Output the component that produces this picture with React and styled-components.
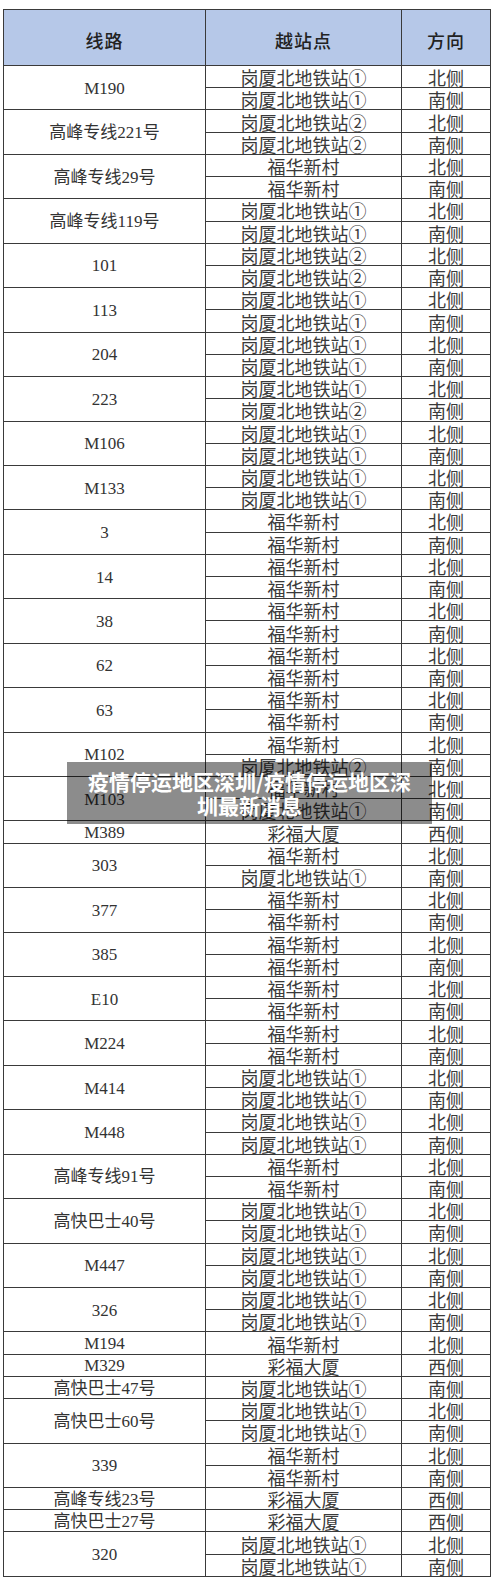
import React from "react";
import styled, { createGlobalStyle } from "styled-components";

const GlobalStyle = createGlobalStyle`
  html, body {
    margin: 0;
    padding: 0;
    background: #ffffff;
  }
`;

const Page = styled.div`
  position: relative;
  width: 500px;
  min-height: 1588px;
  padding: 9px 0 0 3px;
  box-sizing: border-box;
  font-family: "Liberation Serif", "Noto Sans CJK SC", serif;
  color: #333;
`;

const Table = styled.div`
  width: 488px;
  border: 1px solid #3a3a3a;
  border-bottom: none;
  box-sizing: border-box;
`;

const Header = styled.div`
  display: grid;
  grid-template-columns: 202px 196px 1fr;
  height: 56px;
  background: #b6c8e8;
  border-bottom: 1px solid #3a3a3a;
  box-sizing: border-box;
`;

const HeadCell = styled.div`
  display: flex;
  align-items: center;
  justify-content: center;
  padding-top: 4px;
  font-family: "Noto Sans CJK SC", sans-serif;
  font-size: 18px;
  font-weight: 500;
  letter-spacing: 1px;
  color: #222;
  border-right: ${(p) => (p.$last ? "none" : "1px solid #3a3a3a")};
`;

const Group = styled.div`
  display: grid;
  grid-template-columns: 202px 1fr;
`;

const Route = styled.div`
  display: flex;
  align-items: center;
  justify-content: center;
  min-height: 0;
  padding-top: 2px;
  font-size: 17px;
  line-height: 18px;
  color: #333;
  border-right: 1px solid #3a3a3a;
  border-bottom: 1px solid #3a3a3a;
  box-sizing: border-box;
  overflow: hidden;
`;

const Stops = styled.div`
  display: flex;
  flex-direction: column;
`;

const Line = styled.div`
  display: grid;
  grid-template-columns: 196px 1fr;
  height: 22.22px;
  border-bottom: 1px solid #3a3a3a;
  box-sizing: border-box;
`;

const Cell = styled.div`
  display: flex;
  align-items: center;
  justify-content: center;
  padding-top: 1px;
  font-family: "Noto Sans CJK SC", sans-serif;
  font-size: 18px;
  line-height: 20px;
  color: #3a3a3a;
  border-right: ${(p) => (p.$last ? "none" : "1px solid #3a3a3a")};
`;

const Caption = styled.div`
  position: absolute;
  top: 762px;
  left: 67px;
  width: 365px;
  height: 62px;
  padding: 7px 12px 0;
  box-sizing: border-box;
  background: rgba(0, 0, 0, 0.45);
  color: #ffffff;
  font-family: "Noto Sans CJK SC", sans-serif;
  font-size: 21px;
  font-weight: 700;
  line-height: 24px;
  text-align: center;
`;

const G1 = "岗厦北地铁站①";
const G2 = "岗厦北地铁站②";
const F = "福华新村";
const C = "彩福大厦";

const both = (a, b = a) => [
  [a, "北侧"],
  [b, "南侧"],
];

const routes = [
  ["M190", both(G1)],
  ["高峰专线221号", both(G2)],
  ["高峰专线29号", both(F)],
  ["高峰专线119号", both(G1)],
  ["101", both(G2)],
  ["113", both(G1)],
  ["204", both(G1)],
  ["223", both(G1, G2)],
  ["M106", both(G1)],
  ["M133", both(G1)],
  ["3", both(F)],
  ["14", both(F)],
  ["38", both(F)],
  ["62", both(F)],
  ["63", both(F)],
  ["M102", both(F, G2)],
  ["M103", both(F, G1)],
  ["M389", [[C, "西侧"]]],
  ["303", both(F, G1)],
  ["377", both(F)],
  ["385", both(F)],
  ["E10", both(F)],
  ["M224", both(F)],
  ["M414", both(G1)],
  ["M448", both(G1)],
  ["高峰专线91号", both(F)],
  ["高快巴士40号", both(G1)],
  ["M447", both(G1)],
  ["326", both(G1)],
  ["M194", [[F, "北侧"]]],
  ["M329", [[C, "西侧"]]],
  ["高快巴士47号", [[G1, "南侧"]]],
  ["高快巴士60号", both(G1)],
  ["339", both(F)],
  ["高峰专线23号", [[C, "西侧"]]],
  ["高快巴士27号", [[C, "西侧"]]],
  ["320", both(G1)],
];

const App = () => {
  return (
    <Page>
      <GlobalStyle />
      <Table>
        <Header>
          <HeadCell>线路</HeadCell>
          <HeadCell>越站点</HeadCell>
          <HeadCell $last>方向</HeadCell>
        </Header>
        {routes.map(([name, stops], i) => (
          <Group key={i}>
            <Route>{name}</Route>
            <Stops>
              {stops.map(([stop, side], j) => (
                <Line key={j}>
                  <Cell>{stop}</Cell>
                  <Cell $last>{side}</Cell>
                </Line>
              ))}
            </Stops>
          </Group>
        ))}
      </Table>
      <Caption>疫情停运地区深圳/疫情停运地区深圳最新消息</Caption>
    </Page>
  );
};

export default App;
